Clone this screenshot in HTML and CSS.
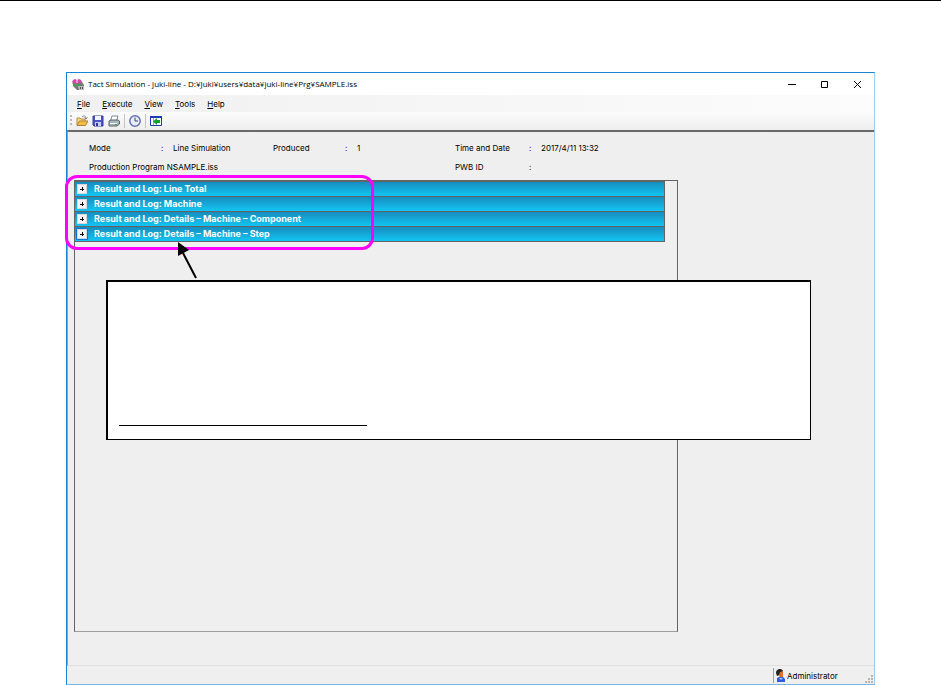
FILE: index.html
```html
<!DOCTYPE html>
<html lang="en">
<head>
    <meta charset="UTF-8">
    <meta name="viewport" content="width=device-width, initial-scale=1.0">
    <title>Tact Simulation</title>
    <link rel="stylesheet" href="styles.css">
</head>
<body>
    <main class="window">
        <header class="title-bar">
            <svg class="app-icon" viewBox="0 0 13 13">
                <path d="M1 4h9l2 3v5H5L1 8z" fill="#777"/>
                <path d="M6 8h6v4H7z" fill="#b9bdc0"/>
                <path d="M8 9h1v2H8zM10 9h1v2h-1z" fill="#555"/>
                <path d="M1 2l2-1 2 1 2-1 2 1 1 2-2 2H2L0 4z" fill="#d048a8"/>
                <path d="M4 2h2v3H4z" fill="#ee90cf"/>
                <path d="M0 5l4 1 5-1-2 3H2z" fill="#45a050"/>
            </svg>
            <h1 class="title">Tact Simulation - juki-line - D:¥Juki¥users¥data¥juki-line¥Prg¥SAMPLE.iss</h1>
            <div class="window-buttons">
                <button type="button" aria-label="Minimize"><svg viewBox="0 0 9 9"><path d="M1 4.5h8"/></svg></button>
                <button type="button" aria-label="Maximize"><svg viewBox="0 0 9 9"><path d="M1.5 1.5h6v6h-6z"/></svg></button>
                <button type="button" aria-label="Close"><svg viewBox="0 0 9 9"><path d="M1 1l7 7M8 1L1 8"/></svg></button>
            </div>
        </header>

        <nav class="menu-bar">
            <button type="button"><u>F</u>ile</button>
            <button type="button"><u>E</u>xecute</button>
            <button type="button"><u>V</u>iew</button>
            <button type="button"><u>T</u>ools</button>
            <button type="button"><u>H</u>elp</button>
        </nav>

        <div class="tool-bar">
            <span class="grip"></span>
            <button type="button" aria-label="Open">
                <svg viewBox="0 0 12 12">
                    <path d="M1 10V3h3l1 1h4v2" fill="#f7dc8a" stroke="#b58a3a"/>
                    <path d="M1 10.5L3.500 6H12l-2.500 4.500z" fill="#f4bd48" stroke="#b08030"/>
                    <path d="M6 2c2-2 4-1 4 1M8.500 2.500L10 4l1.500-1.500" fill="none" stroke="#7a8090"/>
                </svg>
            </button>
            <button type="button" aria-label="Save">
                <svg viewBox="0 0 12 12">
                    <path d="M1 1h10v10H2L1 10z" fill="#4b55c4" stroke="#343c9c"/>
                    <path d="M3 1h6v4H3z" fill="#f2f4ff"/>
                    <path d="M3 7h6v4H3z" fill="#c8cdf2"/>
                    <path d="M4 8h2v3H4z" fill="#30388c"/>
                </svg>
            </button>
            <button type="button" aria-label="Print">
                <svg viewBox="0 0 12 12">
                    <path d="M4 1h6L8.500 6h-6z" fill="#fff" stroke="#7c8790"/>
                    <path d="M1 6l2-1h7l1.500 1v3L9 11H1z" fill="#a8b4b8" stroke="#59666c"/>
                    <path d="M2 8h7v1H2z" fill="#fff"/>
                    <path d="M7 9h2v1H7z" fill="#2aa050"/>
                </svg>
            </button>
            <span class="separator"></span>
            <button type="button" aria-label="Time">
                <svg viewBox="0 0 12 12">
                    <circle cx="6" cy="6" r="5.200" fill="#e8edff" stroke="#6470b8" stroke-width="1.500"/>
                    <path d="M6 2.500V6h3" fill="none" stroke="#39416a"/>
                </svg>
            </button>
            <span class="separator"></span>
            <button type="button" aria-label="Return">
                <svg viewBox="0 0 12 12">
                    <path d="M.5 1.500h11v9H.5z" fill="#fff" stroke="#1c3cba"/>
                    <path d="M0 1h12v2H0z" fill="#1c3cba"/>
                    <path d="M3.500 3v7" stroke="#8fa0e0"/>
                    <path d="M3 6.500L7 3v2h3v3H7v2z" fill="#10a030"/>
                </svg>
            </button>
        </div>

        <section class="content">
            <dl class="info">
                <dt>Mode</dt><dd>:</dd><dd>Line Simulation</dd>
                <dt>Produced</dt><dd>:</dd><dd>1</dd>
                <dt>Time and Date</dt><dd>:</dd><dd>2017/4/11 13:32</dd>
                <dt class="long-label">Production Program N:</dt><dd>SAMPLE.iss</dd>
                <dt class="pwb">PWB ID</dt><dd>:</dd>
            </dl>

            <div class="results">
                <ul class="result-list">
                    <li><button type="button" class="toggle" aria-label="Expand Line Total"></button>Result and Log: Line Total</li>
                    <li><button type="button" class="toggle" aria-label="Expand Machine"></button>Result and Log: Machine</li>
                    <li><button type="button" class="toggle" aria-label="Expand Component"></button>Result and Log: Details – Machine – Component</li>
                    <li><button type="button" class="toggle focused" aria-label="Expand Step"></button>Result and Log: Details – Machine – Step</li>
                </ul>
                <div class="highlight"></div>
                <svg class="arrow" viewBox="0 0 24 40">
                    <path d="M7 12l13 25" stroke="#000" stroke-width="2"/>
                    <path d="M2 1l11 8-11 6z"/>
                </svg>
                <div class="callout"><div class="callout-line"></div></div>
            </div>
        </section>

        <footer class="status-bar">
            <div class="user">
                <svg viewBox="0 0 9 13">
                    <path d="M1 13V9l2-1h4l2 2v3z" fill="#2c5ce0"/>
                    <path d="M3 2h4v6H4L2 6z" fill="#e07028"/>
                    <path d="M0 4c0-5 6-5 7-2L4 3 3 6 1 7z" fill="#252020"/>
                    <path d="M3 9l2 2 2-2z" fill="#a8c8ff"/>
                </svg>
                <span>Administrator</span>
            </div>
            <svg class="size-grip" viewBox="0 0 8 8">
                <path d="M6 0h2v2H6zM3 3h2v2H3zM6 3h2v2H6zM0 6h2v2H0zM3 6h2v2H3zM6 6h2v2H6z" fill="#b4b4b4"/>
            </svg>
        </footer>
    </main>
</body>
</html>
```
FILE: styles.css
```css
* {
    box-sizing: border-box;
}

body {
    display: flex;
    flex-direction: column;
    min-height: 100vh;
    margin: 0;
    padding: 71px 66px 0;
    border-top: 1px solid #000;
    background: #fff;
    color: #000;
    font-family: Inter, "Liberation Sans", sans-serif;
    font-size: 8px;
    line-height: 12px;
}

button {
    padding: 0;
    border: 0;
    background: none;
    color: inherit;
    font: inherit;
}

svg {
    display: block;
}

.window {
    flex: 1;
    display: flex;
    flex-direction: column;
    border: 1px solid #1883d7;
    border-right-color: #9fcdf0;
    border-bottom-color: #76b5e6;
    background: #efefef;
}

/* title bar */
.title-bar {
    display: flex;
    align-items: center;
    height: 22px;
    padding-left: 5px;
    background: #fff;
}

.app-icon {
    width: 13px;
    height: 13px;
    margin-right: 3px;
}

.title {
    flex: 1;
    margin: 0;
    font-family: "Open Sans", sans-serif;
    font-size: 8px;
    font-weight: normal;
    white-space: nowrap;
}

.window-buttons {
    display: flex;
}

.window-buttons button {
    display: flex;
    justify-content: center;
    width: 33px;
}

.window-buttons svg {
    width: 9px;
    height: 9px;
    fill: none;
    stroke: #000;
}

/* menu and tools */
.menu-bar {
    display: flex;
    gap: 12px;
    height: 17px;
    padding-left: 10px;
    background: linear-gradient(to right, #f0f0f0, #fcfcfc);
}

.tool-bar {
    display: flex;
    align-items: center;
    gap: 4px;
    height: 18px;
    padding-left: 3px;
    background: linear-gradient(#fcfcfc, #eee);
}

.tool-bar svg {
    width: 12px;
    height: 12px;
}

.grip {
    width: 2px;
    height: 12px;
    background: repeating-linear-gradient(#b8b8b8 0 2px, transparent 2px 4px);
}

.separator {
    width: 1px;
    height: 14px;
    background: #c4c4c4;
}

/* main area */
.content {
    flex: 1;
    display: flex;
    flex-direction: column;
    padding: 10px 196px 33px 6px;
    border-top: 2px solid #696969;
    border-left: 1px solid #a0a0a0;
    border-bottom: 1px solid #e0e0e0;
}

.info {
    display: grid;
    grid-template-columns: 72px 12px 100px 72px 12px 98px 74px 12px auto;
    row-gap: 7px;
    margin: 0 0 7px 15px;
    white-space: nowrap;
}

.info dd {
    margin: 0;
}

.long-label {
    grid-column: span 2;
}

.pwb {
    grid-column: 7;
}

.results {
    position: relative;
    flex: 1;
    border: 1px solid #646464;
    border-bottom-color: #a0a0a0;
}

.result-list {
    margin: 0 12px 0 0;
    padding: 0;
    border-top: 1px solid #646464;
    border-right: 1px solid #646464;
    list-style: none;
    color: #fff;
    font-size: 9px;
    font-weight: bold;
}

.result-list li {
    display: flex;
    align-items: center;
    gap: 7px;
    height: 15px;
    padding-left: 2px;
    border-bottom: 1px solid #646464;
    background: linear-gradient(#168dbe, #12c5f3);
}

.toggle {
    width: 10px;
    height: 10px;
    border: 1px solid #d8d8d8;
    background:
        linear-gradient(#000, #000) center / 4px 1px no-repeat,
        linear-gradient(#000, #000) center / 1px 4px no-repeat,
        #f4f4f4;
}

.toggle.focused {
    outline: 1px solid #0078d7;
}

/* annotations over the results */
.highlight {
    position: absolute;
    top: -6px;
    left: -10px;
    width: 309px;
    height: 75px;
    border: 3px solid #f0f;
    border-radius: 12px;
}

.arrow {
    position: absolute;
    top: 60px;
    left: 101px;
    width: 24px;
    height: 40px;
}

.callout {
    position: absolute;
    top: 99px;
    left: 31px;
    right: -134px;
    height: 160px;
    padding: 143px 11px 0;
    border: solid #000;
    border-width: 2px 1px 1px 2px;
    background: #fff;
}

.callout-line {
    width: 248px;
    border-top: 1px solid #000;
}

/* status bar */
.status-bar {
    display: flex;
    justify-content: flex-end;
    align-items: flex-end;
    height: 18px;
    padding: 0 1px 1px 0;
}

.user {
    display: flex;
    align-items: center;
    gap: 2px;
    width: 92px;
    height: 15px;
    padding-left: 2px;
    border-left: 1px solid #a0a0a0;
}

.user svg {
    width: 9px;
    height: 13px;
}

.size-grip {
    width: 8px;
    height: 8px;
}
```
